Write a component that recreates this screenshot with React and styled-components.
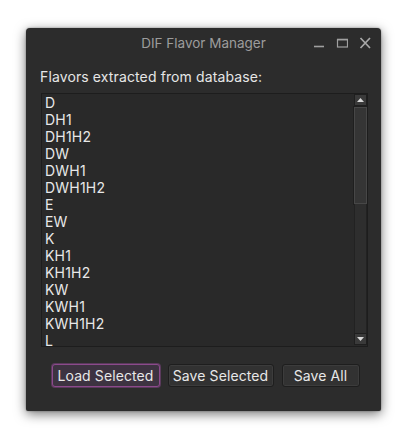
import React from "react";
import styled, { createGlobalStyle } from "styled-components";

const Global = createGlobalStyle`
  html, body { margin: 0; padding: 0; background: #ffffff; }
  body { width: 409px; height: 440px; overflow: hidden; font-family: Inter, "Open Sans", sans-serif; }
`;

const Window = styled.div`
  margin: 28px 0 0 26px;
  width: 355px;
  height: 383px;
  background: #2c2c2c;
  border-radius: 4px 4px 2px 2px;
  box-shadow: 0 3px 12px rgba(0, 0, 0, 0.55), 0 0 2px rgba(0, 0, 0, 0.4);
  display: flex;
  flex-direction: column;
  box-sizing: border-box;
`;

const TitleBar = styled.div`
  height: 30px;
  display: grid;
  grid-template-columns: 1fr auto 1fr;
  align-items: center;
  padding: 0 10px;
`;

const Title = styled.div`
  grid-column: 2;
  font-size: 13.5px;
  color: #9c9c9c;
`;

const Controls = styled.div`
  grid-column: 3;
  justify-self: end;
  display: flex;
  align-items: center;
  gap: 11px;
`;

const Content = styled.div`
  flex: 1;
  display: flex;
  flex-direction: column;
  padding: 10px 13px 23px 15px;
`;

const Label = styled.div`
  font-size: 14px;
  line-height: 18px;
  letter-spacing: 0.12px;
  color: #e6e6e6;
  margin-left: -1px;
  margin-bottom: 7px;
`;

const ListBox = styled.div`
  height: 254px;
  box-sizing: border-box;
  border: 1px solid #1d1d1d;
  background: #292929;
  display: flex;
  overflow: hidden;
`;

const Items = styled.div`
  flex: 1;
  overflow: hidden;
  padding-left: 3px;
`;

const Item = styled.div`
  height: 17px;
  line-height: 17px;
  font-size: 14px;
  letter-spacing: 0.2px;
  color: #e8e8e8;
`;

const ScrollBar = styled.div`
  width: 13px;
  display: flex;
  flex-direction: column;
  padding-bottom: 1px;
  box-sizing: border-box;
`;

const ArrowBtn = styled.div`
  height: 12px;
  box-sizing: border-box;
  border: 1px solid #1f1f1f;
  background: #3a3a3a;
  display: flex;
  align-items: center;
  justify-content: center;
`;

const Thumb = styled.div`
  height: 97px;
  margin-top: 1px;
  box-sizing: border-box;
  border: 1px solid #474747;
  outline: 1px solid #1f1f1f;
  background: #353535;
`;

const Track = styled.div`
  flex: 1;
  background: #2e2e2e;
  border-left: 1px solid #222;
  border-right: 1px solid #222;
`;

const ButtonRow = styled.div`
  margin-top: 16px;
  height: 25px;
  display: flex;
  justify-content: center;
  align-items: center;
  gap: 8px;
  padding-left: 2px;
`;

const Button = styled.button`
  width: ${(p) => p.$w}px;
  height: 23px;
  box-sizing: border-box;
  padding: 0;
  border-radius: 3px;
  font-family: inherit;
  font-size: 14px;
  letter-spacing: 0.1px;
  color: #e8e8e8;
  background: ${(p) => (p.$focused ? "#3d3341" : "#323232")};
  border: 1px solid ${(p) => (p.$focused ? "#8c4a8c" : "#1e1e1e")};
  box-shadow: ${(p) => (p.$focused ? "0 0 0 1px #5a3a5c" : "inset 0 0 0 1px #3c3c3c")};
`;

const items = [
  "D", "DH1", "DH1H2", "DW", "DWH1", "DWH1H2", "E", "EW",
  "K", "KH1", "KH1H2", "KW", "KWH1", "KWH1H2", "L",
];

export default function App() {
  return (
    <>
      <Global />
      <Window>
        <TitleBar>
          <Title>DIF Flavor Manager</Title>
          <Controls>
            <svg width="12" height="12" viewBox="0 0 12 12">
              <line x1="1" y1="9.5" x2="11" y2="9.5" stroke="#a0a0a0" strokeWidth="1.6" />
            </svg>
            <svg width="12" height="12" viewBox="0 0 12 12">
              <rect x="1.5" y="2.5" width="10" height="7.5" fill="none" stroke="#a0a0a0" strokeWidth="1.2" />
              <line x1="1" y1="2.6" x2="12" y2="2.6" stroke="#a0a0a0" strokeWidth="1.6" />
            </svg>
            <svg width="12" height="12" viewBox="0 0 12 12">
              <path d="M1.5 1 L11 11 M11 1 L1.5 11" stroke="#a8a8a8" strokeWidth="1.7" fill="none" />
            </svg>
          </Controls>
        </TitleBar>
        <Content>
          <Label>Flavors extracted from database:</Label>
          <ListBox>
            <Items>
              {items.map((it) => (
                <Item key={it}>{it}</Item>
              ))}
            </Items>
            <ScrollBar>
              <ArrowBtn>
                <svg width="7" height="4" viewBox="0 0 7 4">
                  <path d="M0 4 L3.5 0 L7 4 Z" fill="#d8d8d8" />
                </svg>
              </ArrowBtn>
              <Thumb />
              <Track />
              <ArrowBtn>
                <svg width="7" height="4" viewBox="0 0 7 4">
                  <path d="M0 0 L3.5 4 L7 0 Z" fill="#d8d8d8" />
                </svg>
              </ArrowBtn>
            </ScrollBar>
          </ListBox>
          <ButtonRow>
            <Button $w={108} $focused>Load Selected</Button>
            <Button $w={106}>Save Selected</Button>
            <Button $w={78}>Save All</Button>
          </ButtonRow>
        </Content>
      </Window>
    </>
  );
}
